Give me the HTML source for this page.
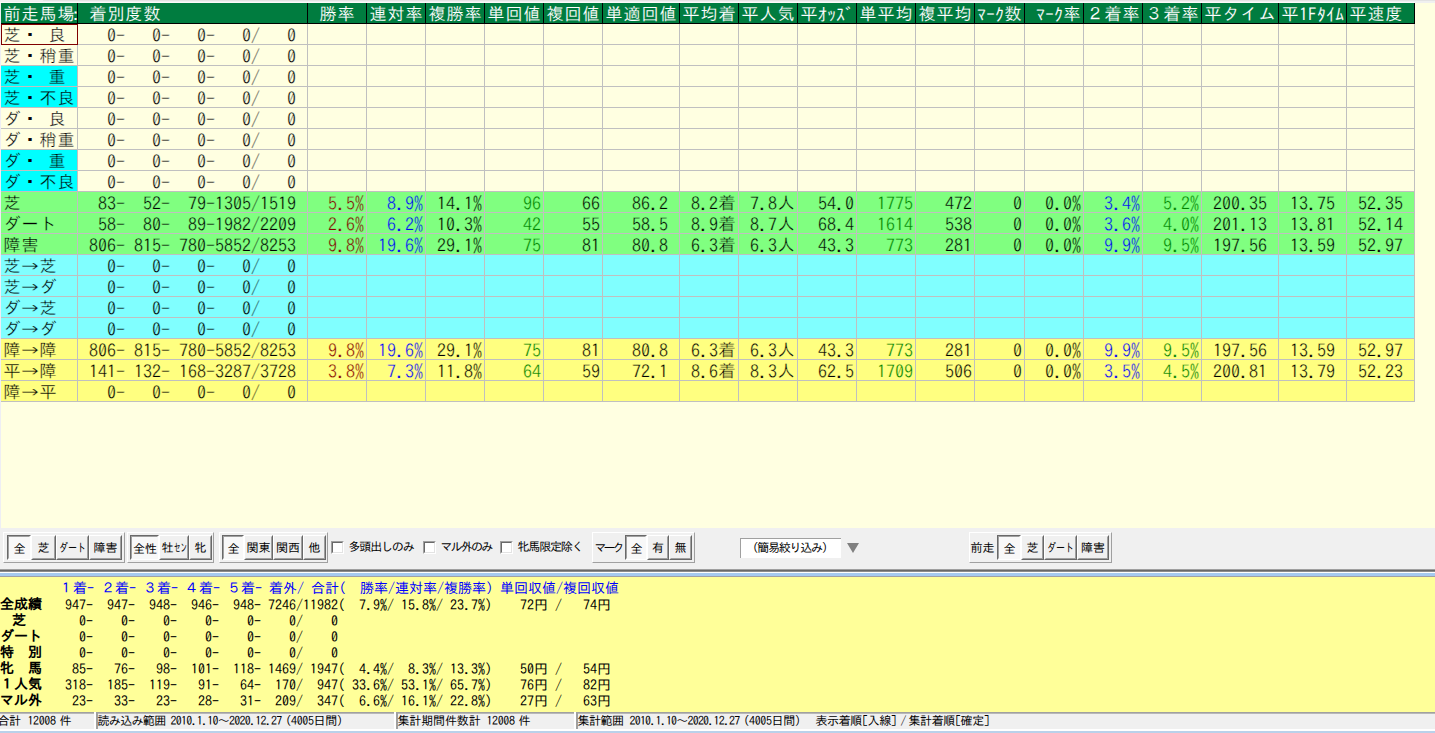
<!DOCTYPE html>
<html lang="ja"><head><meta charset="utf-8"><title>前走馬場別集計</title>
<style>
html,body{margin:0;padding:0;}
body{width:1435px;height:733px;overflow:hidden;position:relative;background:#ffffe1;font-family:"IPAGothic","Liberation Mono","Noto Sans CJK JP",monospace;color:#000;}
div,span,pre{box-sizing:border-box;}
.abs{position:absolute;}
#top{left:0;top:0;width:1435px;height:3px;background:#f0f0f0;}
#top2{left:43px;top:0;width:1392px;height:1px;background:#e3e3e3;}#top3{left:0;top:2px;width:1415px;height:1px;background:#fbfbfb;}
#leftedge{left:0;top:3px;width:1px;height:525px;background:#eeeef4;}
#grid{left:0;top:0;width:1435px;height:528px;font-size:18px;line-height:18px;}
.hd{position:absolute;top:3px;height:20px;background:#007c3f;color:#fff;-webkit-text-stroke:0.12px #007c3f;white-space:pre;overflow:hidden;padding:2px 0 0 2px;}
.hl{position:absolute;top:3px;width:1px;height:21px;background:#000;}
#hb{left:1px;top:23px;width:1414px;height:1px;background:#000;}
.r{position:absolute;left:1px;width:1414px;height:21px;border-bottom:1px solid #c0c0c0;}
.c{position:absolute;top:0;height:20px;white-space:pre;overflow:hidden;padding:2px 0 0 2px;}
.vl{position:absolute;top:24px;width:1px;height:378px;background:#c0c0c0;}
.ly{background:#ffffe1;-webkit-text-stroke:0.3px #ffffe1;}.cy{background:#00ffff;-webkit-text-stroke:0.3px #00ffff;}.gr{background:#80ff80;-webkit-text-stroke:0.3px #80ff80;}.lc{background:#80ffff;-webkit-text-stroke:0.3px #80ffff;}.yl{background:#ffff80;-webkit-text-stroke:0.3px #ffff80;}
.c-r{color:#850000;}.c-b{color:#0000ff;}.c-g{color:#008000;}
.k{font-size:17px;letter-spacing:1px;position:relative;left:0.5px;top:-1.5px;}
.dot{-webkit-text-stroke:0.9px #000;}.cl{margin-left:-4px;}
#sel{left:1px;top:24px;width:77px;height:21px;border:1px solid #800000;}

#tb{left:0;top:528px;width:1435px;height:41px;background:#f0f0f0;}
#s1{left:0;top:569px;width:1435px;height:1px;background:#a0a0a0;}
#s2{left:0;top:570px;width:1435px;height:1px;background:#696969;}
#s3{left:0;top:571px;width:1435px;height:1px;background:#8c8c8c;}
#s4{left:0;top:572px;width:1435px;height:1px;background:#fff;}
#s5{left:0;top:573px;width:1435px;height:3px;background:#a6caf0;}
#s6{left:0;top:576px;width:1435px;height:1px;background:#a0a0a8;}
.ui{font-size:12px;line-height:12px;white-space:pre;}
.fr{position:absolute;top:532px;height:31px;border:1px solid;border-color:#fff #a0a0a0 #a0a0a0 #fff;}
.bt{position:absolute;top:535px;height:25px;border:1px solid;border-color:#fff #696969 #696969 #fff;background:#f0f0f0;text-align:center;padding-top:5px;overflow:hidden;}
.bt:after{content:"";position:absolute;left:0;top:0;right:0;bottom:0;border:1px solid;border-color:transparent #a0a0a0 #a0a0a0 transparent;}
.bt.dn{border-color:#696969 #fff #fff #696969;background:#f8f8f8;padding-top:6px;padding-left:1px;}
.bt.dn:after{border-color:#a0a0a0 transparent transparent #a0a0a0;}
.lb{position:absolute;top:541px;height:12px;}
.cb{position:absolute;top:541px;width:13px;height:13px;background:#fff;border:1px solid;border-color:#a0a0a0 #fff #fff #a0a0a0;}
.cb:after{content:"";position:absolute;left:0;top:0;width:9px;height:9px;border:1px solid;border-color:#696969 #e3e3e3 #e3e3e3 #696969;}
.sq{display:inline-block;height:12px;vertical-align:top;text-align:left;}.sq>span{display:inline-block;transform-origin:0 0;}
#sb{left:740px;top:538px;width:101px;height:20px;background:#fff;border-top:1px solid #a0a0a0;border-left:1px solid #a0a0a0;}
#tri{left:847px;top:543px;width:0;height:0;border-left:6.5px solid transparent;border-right:6.5px solid transparent;border-top:10px solid #808080;}

#yp{left:0;top:577px;width:1435px;height:135px;background:#ffff99;}
#yt{left:1px;top:580px;font-size:14px;line-height:16px;white-space:pre;margin:0;font-family:inherit;}
#yt b{font-weight:bold;position:relative;left:-1px;}#yt i{font-style:normal;position:relative;left:-2px;}
#yt .d{position:relative;left:1px;top:1px;}#yt .h{color:#0000ff;position:relative;left:2px;}
#st0{left:0;top:712px;width:1435px;height:1px;background:#a0a0a0;}#st00{left:0;top:713px;width:1435px;height:1px;background:#b8b8b8;}
#st{left:0;top:714px;width:1435px;height:15px;background:#f0f0f0;}
#st1{left:0;top:729px;width:1435px;height:2px;background:#fff;}
#st2{left:0;top:731px;width:1435px;height:2px;background:#b9d1ea;}
.sw{position:absolute;top:712px;width:2px;height:18px;background:#fff;}
.sg{position:absolute;top:713px;width:2px;height:16px;background:#a0a0a0;}
.sl{position:absolute;top:714px;height:12px;}
</style></head><body>
<div id="top" class="abs"></div><div id="top2" class="abs"></div><div id="top3" class="abs"></div><div id="leftedge" class="abs"></div>
<div id="grid" class="abs">
<div class="hd" style="left:1px;width:76px"><span class="k">前走馬場</span><span class="cl">:</span></div><div class="hd" style="left:78px;width:229px"> <span class="k">着別度数</span></div><div class="hd" style="left:308px;width:58px"> <span class="k">勝率</span></div><div class="hd" style="left:367px;width:58px"><span class="k">連対率</span></div><div class="hd" style="left:426px;width:58px"><span class="k">複勝率</span></div><div class="hd" style="left:485px;width:58px"><span class="k">単回値</span></div><div class="hd" style="left:544px;width:58px"><span class="k">複回値</span></div><div class="hd" style="left:603px;width:76px"><span class="k">単適回値</span></div><div class="hd" style="left:680px;width:58px"><span class="k">平均着</span></div><div class="hd" style="left:739px;width:58px"><span class="k">平人気</span></div><div class="hd" style="left:798px;width:58px"><span class="k">平</span>ｵｯｽﾞ</div><div class="hd" style="left:857px;width:58px"><span class="k">単平均</span></div><div class="hd" style="left:916px;width:58px"><span class="k">複平均</span></div><div class="hd" style="left:975px;width:49px">ﾏｰｸ<span class="k">数</span></div><div class="hd" style="left:1025px;width:58px"> ﾏｰｸ<span class="k">率</span></div><div class="hd" style="left:1084px;width:58px"><span class="k">２着率</span></div><div class="hd" style="left:1143px;width:58px"><span class="k">３着率</span></div><div class="hd" style="left:1202px;width:76px"><span class="k">平タイム</span></div><div class="hd" style="left:1279px;width:67px"><span class="k">平</span>1Fﾀｲﾑ</div><div class="hd" style="left:1347px;width:67px"><span class="k">平速度</span></div>
<div class="hl" style="left:77px"></div><div class="hl" style="left:307px"></div><div class="hl" style="left:366px"></div><div class="hl" style="left:425px"></div><div class="hl" style="left:484px"></div><div class="hl" style="left:543px"></div><div class="hl" style="left:602px"></div><div class="hl" style="left:679px"></div><div class="hl" style="left:738px"></div><div class="hl" style="left:797px"></div><div class="hl" style="left:856px"></div><div class="hl" style="left:915px"></div><div class="hl" style="left:974px"></div><div class="hl" style="left:1024px"></div><div class="hl" style="left:1083px"></div><div class="hl" style="left:1142px"></div><div class="hl" style="left:1201px"></div><div class="hl" style="left:1278px"></div><div class="hl" style="left:1346px"></div><div class="hl" style="left:1414px"></div><div id="hb" class="abs"></div>
<div class="r ly" style="top:24px"><span class="c ly" style="left:0;width:76px"><span class="k">芝<span class="dot">・</span></span> <span class="k">良</span></span><span class="c" style="left:77px;width:229px">   0-   0-   0-   0/   0</span></div>
<div class="r ly" style="top:45px"><span class="c ly" style="left:0;width:76px"><span class="k">芝<span class="dot">・</span>稍重</span></span><span class="c" style="left:77px;width:229px">   0-   0-   0-   0/   0</span></div>
<div class="r ly" style="top:66px"><span class="c cy" style="left:0;width:76px"><span class="k">芝<span class="dot">・</span></span> <span class="k">重</span></span><span class="c" style="left:77px;width:229px">   0-   0-   0-   0/   0</span></div>
<div class="r ly" style="top:87px"><span class="c cy" style="left:0;width:76px"><span class="k">芝<span class="dot">・</span>不良</span></span><span class="c" style="left:77px;width:229px">   0-   0-   0-   0/   0</span></div>
<div class="r ly" style="top:108px"><span class="c ly" style="left:0;width:76px"><span class="k">ダ<span class="dot">・</span></span> <span class="k">良</span></span><span class="c" style="left:77px;width:229px">   0-   0-   0-   0/   0</span></div>
<div class="r ly" style="top:129px"><span class="c ly" style="left:0;width:76px"><span class="k">ダ<span class="dot">・</span>稍重</span></span><span class="c" style="left:77px;width:229px">   0-   0-   0-   0/   0</span></div>
<div class="r ly" style="top:150px"><span class="c cy" style="left:0;width:76px"><span class="k">ダ<span class="dot">・</span></span> <span class="k">重</span></span><span class="c" style="left:77px;width:229px">   0-   0-   0-   0/   0</span></div>
<div class="r ly" style="top:171px"><span class="c cy" style="left:0;width:76px"><span class="k">ダ<span class="dot">・</span>不良</span></span><span class="c" style="left:77px;width:229px">   0-   0-   0-   0/   0</span></div>
<div class="r gr" style="top:192px"><span class="c gr" style="left:0;width:76px"><span class="k">芝</span></span><span class="c" style="left:77px;width:229px">  83-  52-  79-1305/1519</span><span class="c c-r" style="left:307px;width:58px">  5.5%</span><span class="c c-b" style="left:366px;width:58px">  8.9%</span><span class="c " style="left:425px;width:58px"> 14.1%</span><span class="c c-g" style="left:484px;width:58px">    96</span><span class="c " style="left:543px;width:58px">    66</span><span class="c " style="left:602px;width:76px">   86.2</span><span class="c " style="left:679px;width:58px"> 8.2<span class="k">着</span></span><span class="c " style="left:738px;width:58px"> 7.8<span class="k">人</span></span><span class="c " style="left:797px;width:58px">  54.0</span><span class="c c-g" style="left:856px;width:58px">  1775</span><span class="c " style="left:915px;width:58px">   472</span><span class="c " style="left:974px;width:49px">    0</span><span class="c " style="left:1024px;width:58px">  0.0%</span><span class="c c-b" style="left:1083px;width:58px">  3.4%</span><span class="c c-g" style="left:1142px;width:58px">  5.2%</span><span class="c " style="left:1201px;width:76px"> 200.35</span><span class="c " style="left:1278px;width:67px"> 13.75</span><span class="c " style="left:1346px;width:67px"> 52.35</span></div>
<div class="r gr" style="top:213px"><span class="c gr" style="left:0;width:76px"><span class="k">ダート</span></span><span class="c" style="left:77px;width:229px">  58-  80-  89-1982/2209</span><span class="c c-r" style="left:307px;width:58px">  2.6%</span><span class="c c-b" style="left:366px;width:58px">  6.2%</span><span class="c " style="left:425px;width:58px"> 10.3%</span><span class="c c-g" style="left:484px;width:58px">    42</span><span class="c " style="left:543px;width:58px">    55</span><span class="c " style="left:602px;width:76px">   58.5</span><span class="c " style="left:679px;width:58px"> 8.9<span class="k">着</span></span><span class="c " style="left:738px;width:58px"> 8.7<span class="k">人</span></span><span class="c " style="left:797px;width:58px">  68.4</span><span class="c c-g" style="left:856px;width:58px">  1614</span><span class="c " style="left:915px;width:58px">   538</span><span class="c " style="left:974px;width:49px">    0</span><span class="c " style="left:1024px;width:58px">  0.0%</span><span class="c c-b" style="left:1083px;width:58px">  3.6%</span><span class="c c-g" style="left:1142px;width:58px">  4.0%</span><span class="c " style="left:1201px;width:76px"> 201.13</span><span class="c " style="left:1278px;width:67px"> 13.81</span><span class="c " style="left:1346px;width:67px"> 52.14</span></div>
<div class="r gr" style="top:234px"><span class="c gr" style="left:0;width:76px"><span class="k">障害</span></span><span class="c" style="left:77px;width:229px"> 806- 815- 780-5852/8253</span><span class="c c-r" style="left:307px;width:58px">  9.8%</span><span class="c c-b" style="left:366px;width:58px"> 19.6%</span><span class="c " style="left:425px;width:58px"> 29.1%</span><span class="c c-g" style="left:484px;width:58px">    75</span><span class="c " style="left:543px;width:58px">    81</span><span class="c " style="left:602px;width:76px">   80.8</span><span class="c " style="left:679px;width:58px"> 6.3<span class="k">着</span></span><span class="c " style="left:738px;width:58px"> 6.3<span class="k">人</span></span><span class="c " style="left:797px;width:58px">  43.3</span><span class="c c-g" style="left:856px;width:58px">   773</span><span class="c " style="left:915px;width:58px">   281</span><span class="c " style="left:974px;width:49px">    0</span><span class="c " style="left:1024px;width:58px">  0.0%</span><span class="c c-b" style="left:1083px;width:58px">  9.9%</span><span class="c c-g" style="left:1142px;width:58px">  9.5%</span><span class="c " style="left:1201px;width:76px"> 197.56</span><span class="c " style="left:1278px;width:67px"> 13.59</span><span class="c " style="left:1346px;width:67px"> 52.97</span></div>
<div class="r lc" style="top:255px"><span class="c lc" style="left:0;width:76px"><span class="k">芝</span>→<span class="k">芝</span></span><span class="c" style="left:77px;width:229px">   0-   0-   0-   0/   0</span></div>
<div class="r lc" style="top:276px"><span class="c lc" style="left:0;width:76px"><span class="k">芝</span>→<span class="k">ダ</span></span><span class="c" style="left:77px;width:229px">   0-   0-   0-   0/   0</span></div>
<div class="r lc" style="top:297px"><span class="c lc" style="left:0;width:76px"><span class="k">ダ</span>→<span class="k">芝</span></span><span class="c" style="left:77px;width:229px">   0-   0-   0-   0/   0</span></div>
<div class="r lc" style="top:318px"><span class="c lc" style="left:0;width:76px"><span class="k">ダ</span>→<span class="k">ダ</span></span><span class="c" style="left:77px;width:229px">   0-   0-   0-   0/   0</span></div>
<div class="r yl" style="top:339px"><span class="c yl" style="left:0;width:76px"><span class="k">障</span>→<span class="k">障</span></span><span class="c" style="left:77px;width:229px"> 806- 815- 780-5852/8253</span><span class="c c-r" style="left:307px;width:58px">  9.8%</span><span class="c c-b" style="left:366px;width:58px"> 19.6%</span><span class="c " style="left:425px;width:58px"> 29.1%</span><span class="c c-g" style="left:484px;width:58px">    75</span><span class="c " style="left:543px;width:58px">    81</span><span class="c " style="left:602px;width:76px">   80.8</span><span class="c " style="left:679px;width:58px"> 6.3<span class="k">着</span></span><span class="c " style="left:738px;width:58px"> 6.3<span class="k">人</span></span><span class="c " style="left:797px;width:58px">  43.3</span><span class="c c-g" style="left:856px;width:58px">   773</span><span class="c " style="left:915px;width:58px">   281</span><span class="c " style="left:974px;width:49px">    0</span><span class="c " style="left:1024px;width:58px">  0.0%</span><span class="c c-b" style="left:1083px;width:58px">  9.9%</span><span class="c c-g" style="left:1142px;width:58px">  9.5%</span><span class="c " style="left:1201px;width:76px"> 197.56</span><span class="c " style="left:1278px;width:67px"> 13.59</span><span class="c " style="left:1346px;width:67px"> 52.97</span></div>
<div class="r yl" style="top:360px"><span class="c yl" style="left:0;width:76px"><span class="k">平</span>→<span class="k">障</span></span><span class="c" style="left:77px;width:229px"> 141- 132- 168-3287/3728</span><span class="c c-r" style="left:307px;width:58px">  3.8%</span><span class="c c-b" style="left:366px;width:58px">  7.3%</span><span class="c " style="left:425px;width:58px"> 11.8%</span><span class="c c-g" style="left:484px;width:58px">    64</span><span class="c " style="left:543px;width:58px">    59</span><span class="c " style="left:602px;width:76px">   72.1</span><span class="c " style="left:679px;width:58px"> 8.6<span class="k">着</span></span><span class="c " style="left:738px;width:58px"> 8.3<span class="k">人</span></span><span class="c " style="left:797px;width:58px">  62.5</span><span class="c c-g" style="left:856px;width:58px">  1709</span><span class="c " style="left:915px;width:58px">   506</span><span class="c " style="left:974px;width:49px">    0</span><span class="c " style="left:1024px;width:58px">  0.0%</span><span class="c c-b" style="left:1083px;width:58px">  3.5%</span><span class="c c-g" style="left:1142px;width:58px">  4.5%</span><span class="c " style="left:1201px;width:76px"> 200.81</span><span class="c " style="left:1278px;width:67px"> 13.79</span><span class="c " style="left:1346px;width:67px"> 52.23</span></div>
<div class="r yl" style="top:381px"><span class="c yl" style="left:0;width:76px"><span class="k">障</span>→<span class="k">平</span></span><span class="c" style="left:77px;width:229px">   0-   0-   0-   0/   0</span></div>
<div class="vl" style="left:77px"></div><div class="vl" style="left:307px"></div><div class="vl" style="left:366px"></div><div class="vl" style="left:425px"></div><div class="vl" style="left:484px"></div><div class="vl" style="left:543px"></div><div class="vl" style="left:602px"></div><div class="vl" style="left:679px"></div><div class="vl" style="left:738px"></div><div class="vl" style="left:797px"></div><div class="vl" style="left:856px"></div><div class="vl" style="left:915px"></div><div class="vl" style="left:974px"></div><div class="vl" style="left:1024px"></div><div class="vl" style="left:1083px"></div><div class="vl" style="left:1142px"></div><div class="vl" style="left:1201px"></div><div class="vl" style="left:1278px"></div><div class="vl" style="left:1346px"></div><div class="vl" style="left:1414px"></div><div id="sel" class="abs"></div>
</div>
<div id="tb" class="abs"></div><div id="s1" class="abs"></div><div id="s2" class="abs"></div><div id="s3" class="abs"></div><div id="s4" class="abs"></div><div id="s5" class="abs"></div><div id="s6" class="abs"></div>
<div class="fr" style="left:3px;width:122px"></div><div class="bt ui dn" style="left:7px;width:24px;">全</div><div class="bt ui" style="left:31px;width:25px;">芝</div><div class="bt ui" style="left:56px;width:33px;"><span class="sq" style="width:27px"><span style="transform:scaleX(0.750)">ダート</span></span></div><div class="bt ui" style="left:89px;width:33px;">障害</div>
<div class="fr" style="left:127px;width:87px"></div><div class="bt ui dn" style="left:130px;width:29px;">全性</div><div class="bt ui" style="left:159px;width:30px;">牡<span class="sq" style="width:13px"><span style="transform:scaleX(0.542)">セン</span></span></div><div class="bt ui" style="left:189px;width:23px;">牝</div>
<div class="fr" style="left:219px;width:109px"></div><div class="bt ui dn" style="left:222px;width:22px;">全</div><div class="bt ui" style="left:244px;width:29px;">関東</div><div class="bt ui" style="left:273px;width:30px;">関西</div><div class="bt ui" style="left:303px;width:23px;">他</div>
<div class="cb" style="left:331px"></div><span class="lb ui" style="left:348.5px;letter-spacing:-1.17px;top:540px">多頭出しのみ</span><div class="cb" style="left:423px"></div><span class="lb ui" style="left:440.5px;letter-spacing:-1.80px;top:540px">マル外のみ</span><div class="cb" style="left:500px"></div><span class="lb ui" style="left:517.5px;letter-spacing:-1.17px;top:540px">牝馬限定除く</span>
<div class="fr" style="left:592px;width:103px"></div><span class="lb ui" style="left:594.5px;letter-spacing:-3.00px">マーク</span><div class="bt ui dn" style="left:625px;width:22px;">全</div><div class="bt ui" style="left:647px;width:22px;">有</div><div class="bt ui" style="left:669px;width:23px;">無</div>
<div id="sb" class="abs"></div><span class="lb ui" style="left:746.5px;letter-spacing:-1.25px">（簡易絞り込み）</span><div id="tri" class="abs"></div>
<div class="fr" style="left:969px;width:143px"></div><span class="lb ui" style="left:970.5px;letter-spacing:0.00px">前走</span><div class="bt ui dn" style="left:997px;width:24px;">全</div><div class="bt ui" style="left:1021px;width:23px;">芝</div><div class="bt ui" style="left:1044px;width:33px;"><span class="sq" style="width:27px"><span style="transform:scaleX(0.750)">ダート</span></span></div><div class="bt ui" style="left:1077px;width:32px;">障害</div>
<div id="yp" class="abs"></div>
<pre id="yt" class="abs"><span class="h">        １着- ２着- ３着- ４着- ５着- 着外/ 合計(  勝率/連対率/複勝率) 単回収値/複回収値</span>
<b>全成績</b><span class="d">   947-  947-  948-  946-  948- 7246/11982(  7.9%/ 15.8%/ 23.7%)    72円 /   74円</span>
<b>  <i>芝</i>  </b><span class="d">     0-    0-    0-    0-    0-    0/    0</span>
<b>ダート</b><span class="d">     0-    0-    0-    0-    0-    0/    0</span>
<b>特　別</b><span class="d">     0-    0-    0-    0-    0-    0/    0</span>
<b>牝　馬</b><span class="d">    85-   76-   98-  101-  118- 1469/ 1947(  4.4%/  8.3%/ 13.3%)    50円 /   54円</span>
<b>１人気</b><span class="d">   318-  185-  119-   91-   64-  170/  947( 33.6%/ 53.1%/ 65.7%)    76円 /   82円</span>
<b>マル外</b><span class="d">    23-   33-   23-   28-   31-  209/  347(  6.6%/ 16.1%/ 22.8%)    27円 /   63円</span>
</pre>
<div id="st0" class="abs"></div><div id="st00" class="abs"></div><div id="st" class="abs"></div><div id="st1" class="abs"></div><div id="st2" class="abs"></div>
<div class="sw" style="left:94px"></div><div class="sg" style="left:96px"></div><div class="sw" style="left:394px"></div><div class="sg" style="left:396px"></div><div class="sw" style="left:574px"></div><div class="sg" style="left:576px"></div>
<span class="sl ui" style="left:-2.5px;letter-spacing:-0.50px">合計</span><span class="sl ui" style="left:27.5px;letter-spacing:-0.40px">12008</span><span class="sl ui" style="left:59.5px;letter-spacing:0.00px">件</span><span class="sl ui" style="left:97.5px;letter-spacing:-0.67px">読み込み範囲</span><span class="sl ui" style="left:170.5px;letter-spacing:-0.75px">2010.1.10～2020.12.27</span><span class="sl ui" style="left:285.5px;letter-spacing:-0.38px">(4005日間)</span><span class="sl ui" style="left:397.5px;letter-spacing:-0.14px">集計期間件数計</span><span class="sl ui" style="left:486.5px;letter-spacing:-0.40px">12008</span><span class="sl ui" style="left:518.5px;letter-spacing:0.00px">件</span><span class="sl ui" style="left:577.5px;letter-spacing:-0.50px">集計範囲</span><span class="sl ui" style="left:629.5px;letter-spacing:-0.80px">2010.1.10～2020.12.27</span><span class="sl ui" style="left:743.5px;letter-spacing:-0.38px">(4005日間)</span><span class="sl ui" style="left:815.5px;letter-spacing:-0.38px">表示着順[入線]</span><span class="sl ui" style="left:900.5px;letter-spacing:-1.00px">/</span><span class="sl ui" style="left:908.5px;letter-spacing:-0.38px">集計着順[確定]</span>
</body></html>
